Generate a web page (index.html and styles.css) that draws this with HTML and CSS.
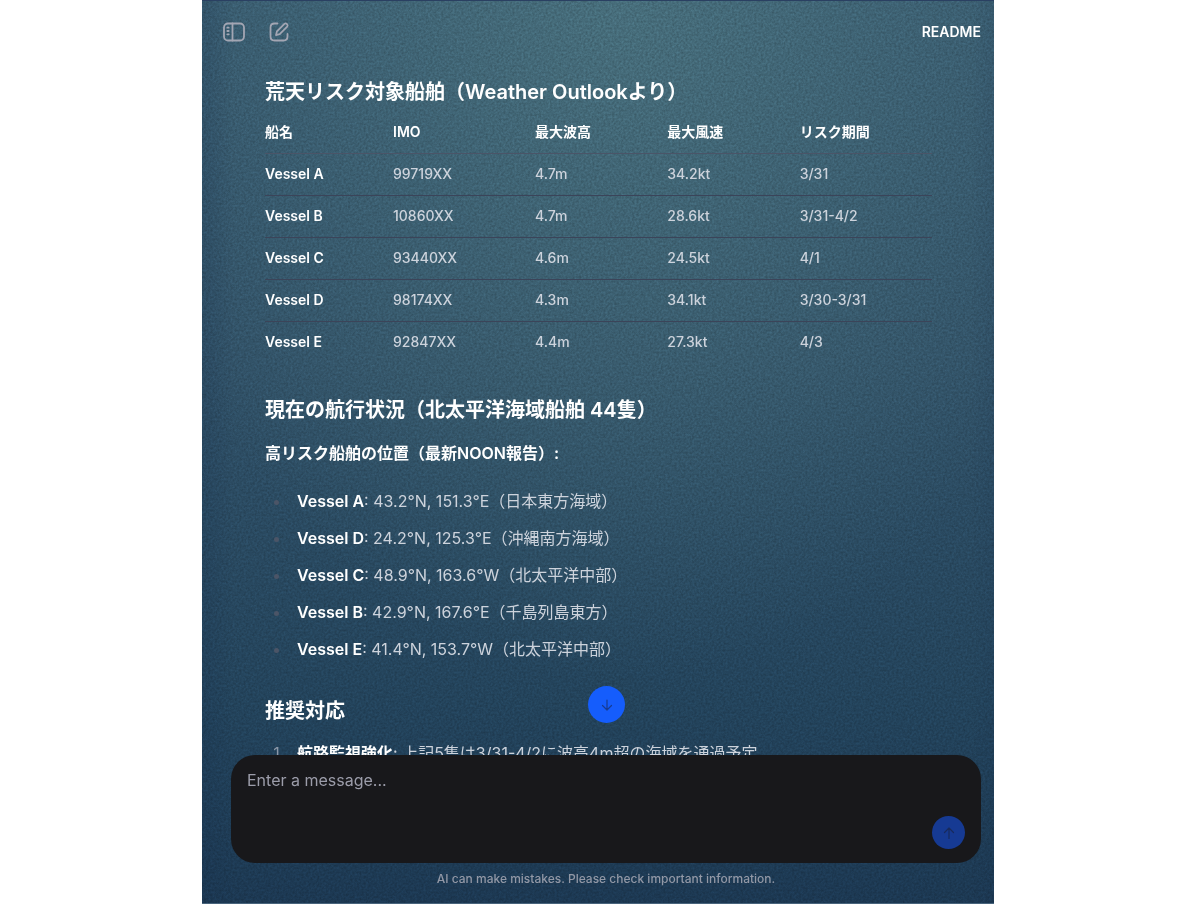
FILE: index.html
```html
<!DOCTYPE html>
<html lang="ja">
<head>
  <meta charset="UTF-8">
  <meta name="viewport" content="width=device-width, initial-scale=1.0">
  <title>Vessel Risk Chat</title>
  <link rel="stylesheet" href="styles.css">
</head>
<body>
  <div class="app">
    <!-- grain over the gradient -->
    <svg class="grain" aria-hidden="true">
      <filter id="noise" color-interpolation-filters="sRGB">
        <feTurbulence type="fractalNoise" baseFrequency="0.45" numOctaves="2" stitchTiles="stitch"/>
        <feColorMatrix values="1 0 0 0 0  1 0 0 0 0  1 0 0 0 0  0 0 0 0 1"/>
      </filter>
      <rect width="100%" height="100%" filter="url(#noise)"/>
    </svg>

    <header class="topbar">
      <button class="icon_btn" type="button" aria-label="Toggle sidebar">
        <svg width="24" height="24" viewBox="0 0 24 24" fill="none" stroke="currentColor" stroke-width="1.8" stroke-linecap="round">
          <rect x="2" y="3.5" width="20" height="17" rx="4"/>
          <path d="M10.5 3.5v17M5.3 7.7h1.4M5.3 11h1.4M5.3 14.3h1.4"/>
        </svg>
      </button>
      <button class="icon_btn" type="button" aria-label="New chat">
        <svg width="24" height="24" viewBox="0 0 24 24" fill="none" stroke="currentColor" stroke-width="1.8" stroke-linecap="round" stroke-linejoin="round">
          <path d="M10.5 3.5h-3c-2.7 0-4 1.3-4 4v9c0 2.7 1.3 4 4 4h9c2.7 0 4-1.3 4-4V14"/>
          <path d="M17.4 3.9a2 2 0 0 1 2.8 2.8l-7.5 7.5-3.700.9.9-3.700z"/>
        </svg>
      </button>
      <a class="readme" href="#">README</a>
    </header>

    <main class="messages">
      <div class="message">
        <h3>荒天リスク対象船舶（Weather Outlookより）</h3>
        <table class="risk_table">
          <thead>
            <tr><th class="col_name">船名</th><th class="col_imo">IMO</th><th>最大波高</th><th>最大風速</th><th>リスク期間</th></tr>
          </thead>
          <tbody>
            <tr><td><strong>Vessel A</strong></td><td>99719XX</td><td>4.7m</td><td>34.2kt</td><td>3/31</td></tr>
            <tr><td><strong>Vessel B</strong></td><td>10860XX</td><td>4.7m</td><td>28.6kt</td><td>3/31-4/2</td></tr>
            <tr><td><strong>Vessel C</strong></td><td>93440XX</td><td>4.6m</td><td>24.5kt</td><td>4/1</td></tr>
            <tr><td><strong>Vessel D</strong></td><td>98174XX</td><td>4.3m</td><td>34.1kt</td><td>3/30-3/31</td></tr>
            <tr><td><strong>Vessel E</strong></td><td>92847XX</td><td>4.4m</td><td>27.3kt</td><td>4/3</td></tr>
          </tbody>
        </table>

        <h3>現在の航行状況（北太平洋海域船舶 44隻）</h3>
        <p><strong>高リスク船舶の位置（最新NOON報告）:</strong></p>
        <ul>
          <li><strong>Vessel A</strong>: 43.2°N, 151.3°E（日本東方海域）</li>
          <li><strong>Vessel D</strong>: 24.2°N, 125.3°E（沖縄南方海域）</li>
          <li><strong>Vessel C</strong>: 48.9°N, 163.6°W（北太平洋中部）</li>
          <li><strong>Vessel B</strong>: 42.9°N, 167.6°E（千島列島東方）</li>
          <li><strong>Vessel E</strong>: 41.4°N, 153.7°W（北太平洋中部）</li>
        </ul>

        <h3>推奨対応</h3>
        <ol>
          <li><strong>航路監視強化</strong>: 上記5隻は3/31-4/2に波高4m超の海域を通過予定</li>
        </ol>
      </div>
    </main>

    <footer class="bottom">
      <button class="round_btn scroll_btn" type="button" aria-label="Scroll to bottom">
        <svg width="14" height="14" viewBox="0 0 14 14" fill="none" stroke="currentColor" stroke-width="1.2" stroke-linecap="round" stroke-linejoin="round">
          <path d="M7 2v10M2.5 7.5L7 12l4.5-4.5"/>
        </svg>
      </button>
      <form class="composer">
        <textarea placeholder="Enter a message..." aria-label="Message"></textarea>
        <button class="round_btn send_btn" type="button" aria-label="Send">
          <svg width="14" height="14" viewBox="0 0 14 14" fill="none" stroke="currentColor" stroke-width="1.2" stroke-linecap="round" stroke-linejoin="round">
            <path d="M7 12.5V2M2.5 6.5L7 2l4.5 4.5"/>
          </svg>
        </button>
      </form>
      <p class="notice">AI can make mistakes. Please check important information.</p>
    </footer>
  </div>
</body>
</html>
```
FILE: styles.css
```css
* {
  box-sizing: border-box;
}

body {
  margin: 0;
  background: #fff;
  font-family: Inter, "Noto Sans CJK JP", sans-serif;
  font-size: 16px;
  color: #cdd3dc;
}

.app {
  position: relative;
  display: flex;
  flex-direction: column;
  max-width: 792px;
  height: 100vh;
  margin: 0 auto;
  overflow: hidden;
  border-top: 1px solid #2a4062;
  border-bottom: 1px solid #48647c;
  background:
    linear-gradient(90deg, rgba(20, 45, 75, 0.2), transparent 4%, transparent 97%, rgba(20, 45, 75, 0.1)),
    radial-gradient(ellipse 65% 75% at 53% 0%, rgba(92, 136, 140, 0.45), transparent),
    linear-gradient(180deg, #36586d 0%, #305066 40%, #23435b 78%, #1c3852 100%);
}

.grain {
  position: absolute;
  top: 0;
  left: 0;
  width: 100%;
  height: 100%;
  opacity: 0.2;
  mix-blend-mode: overlay;
  pointer-events: none;
}

/* top bar */
.topbar {
  position: relative;
  display: flex;
  align-items: center;
  gap: 21px;
  height: 61px;
  padding: 0 13px 0 20px;
}

.icon_btn {
  display: flex;
  padding: 0;
  border: 0;
  background: none;
  color: #a3a6b3;
}

.readme {
  margin-left: auto;
  color: #fff;
  font-size: 14px;
  font-weight: 600;
  text-decoration: none;
}

/* conversation */
.messages {
  position: relative;
  flex: 1;
  min-height: 0;
  overflow: hidden;
}

.message {
  padding: 14px 62px 0 63px;
}

h3 {
  margin: 0;
  color: #fff;
  font-size: 20px;
  font-weight: 600;
  line-height: 32px;
}

strong {
  color: #fff;
  font-weight: 600;
}

.risk_table {
  width: 100%;
  margin: 3px 0 31px;
  table-layout: fixed;
  border-collapse: collapse;
  font-size: 14px;
  font-weight: 500;
  line-height: 24px;
}

.risk_table th,
.risk_table td {
  height: 42px;
  padding: 0;
  text-align: left;
}

.risk_table th {
  color: #fff;
  font-weight: 600;
  border-bottom: 1px solid #4a5568;
}

.risk_table td {
  border-bottom: 1px solid #3b4459;
}

.risk_table tr:last-child td {
  border-bottom: 0;
}

.risk_table .col_name {
  width: 128px;
}

.risk_table .col_imo {
  width: 142px;
}

.message p {
  margin: 13px 0 20px;
  line-height: 28px;
}

ul,
ol {
  margin: 0;
  padding-left: 26px;
}

li {
  margin-bottom: 9px;
  padding-left: 6px;
  line-height: 28px;
}

ul {
  margin-bottom: 32px;
}

ul li::marker {
  color: #4b5567;
}

ol {
  margin-top: 12px;
}

ol li::marker {
  color: #8b97a8;
}

/* message box */
.bottom {
  position: relative;
  padding: 0 13px 0 29px;
}

.round_btn {
  display: flex;
  align-items: center;
  justify-content: center;
  padding: 0;
  border: 0;
  border-radius: 50%;
}

.scroll_btn {
  position: absolute;
  top: -69px;
  left: 50%;
  width: 37px;
  height: 37px;
  margin-left: -10px;
  background: #155dfc;
  color: #173b91;
}

.composer {
  display: flex;
  align-items: flex-end;
  height: 108px;
  padding: 13px 16px 14px;
  border-radius: 24px;
  background: #18181b;
}

.composer textarea {
  flex: 1;
  height: 100%;
  padding: 0;
  border: 0;
  outline: none;
  resize: none;
  background: none;
  color: #fff;
  font: inherit;
  line-height: 24px;
}

.composer textarea::placeholder {
  color: #9c9daa;
}

.send_btn {
  width: 33px;
  height: 33px;
  background: #163a93;
  color: #182a5c;
}

.notice {
  margin: 0;
  padding: 8px 0 16px;
  color: #9298a6;
  font-size: 12px;
  font-weight: 500;
  line-height: 16px;
  text-align: center;
}
```
